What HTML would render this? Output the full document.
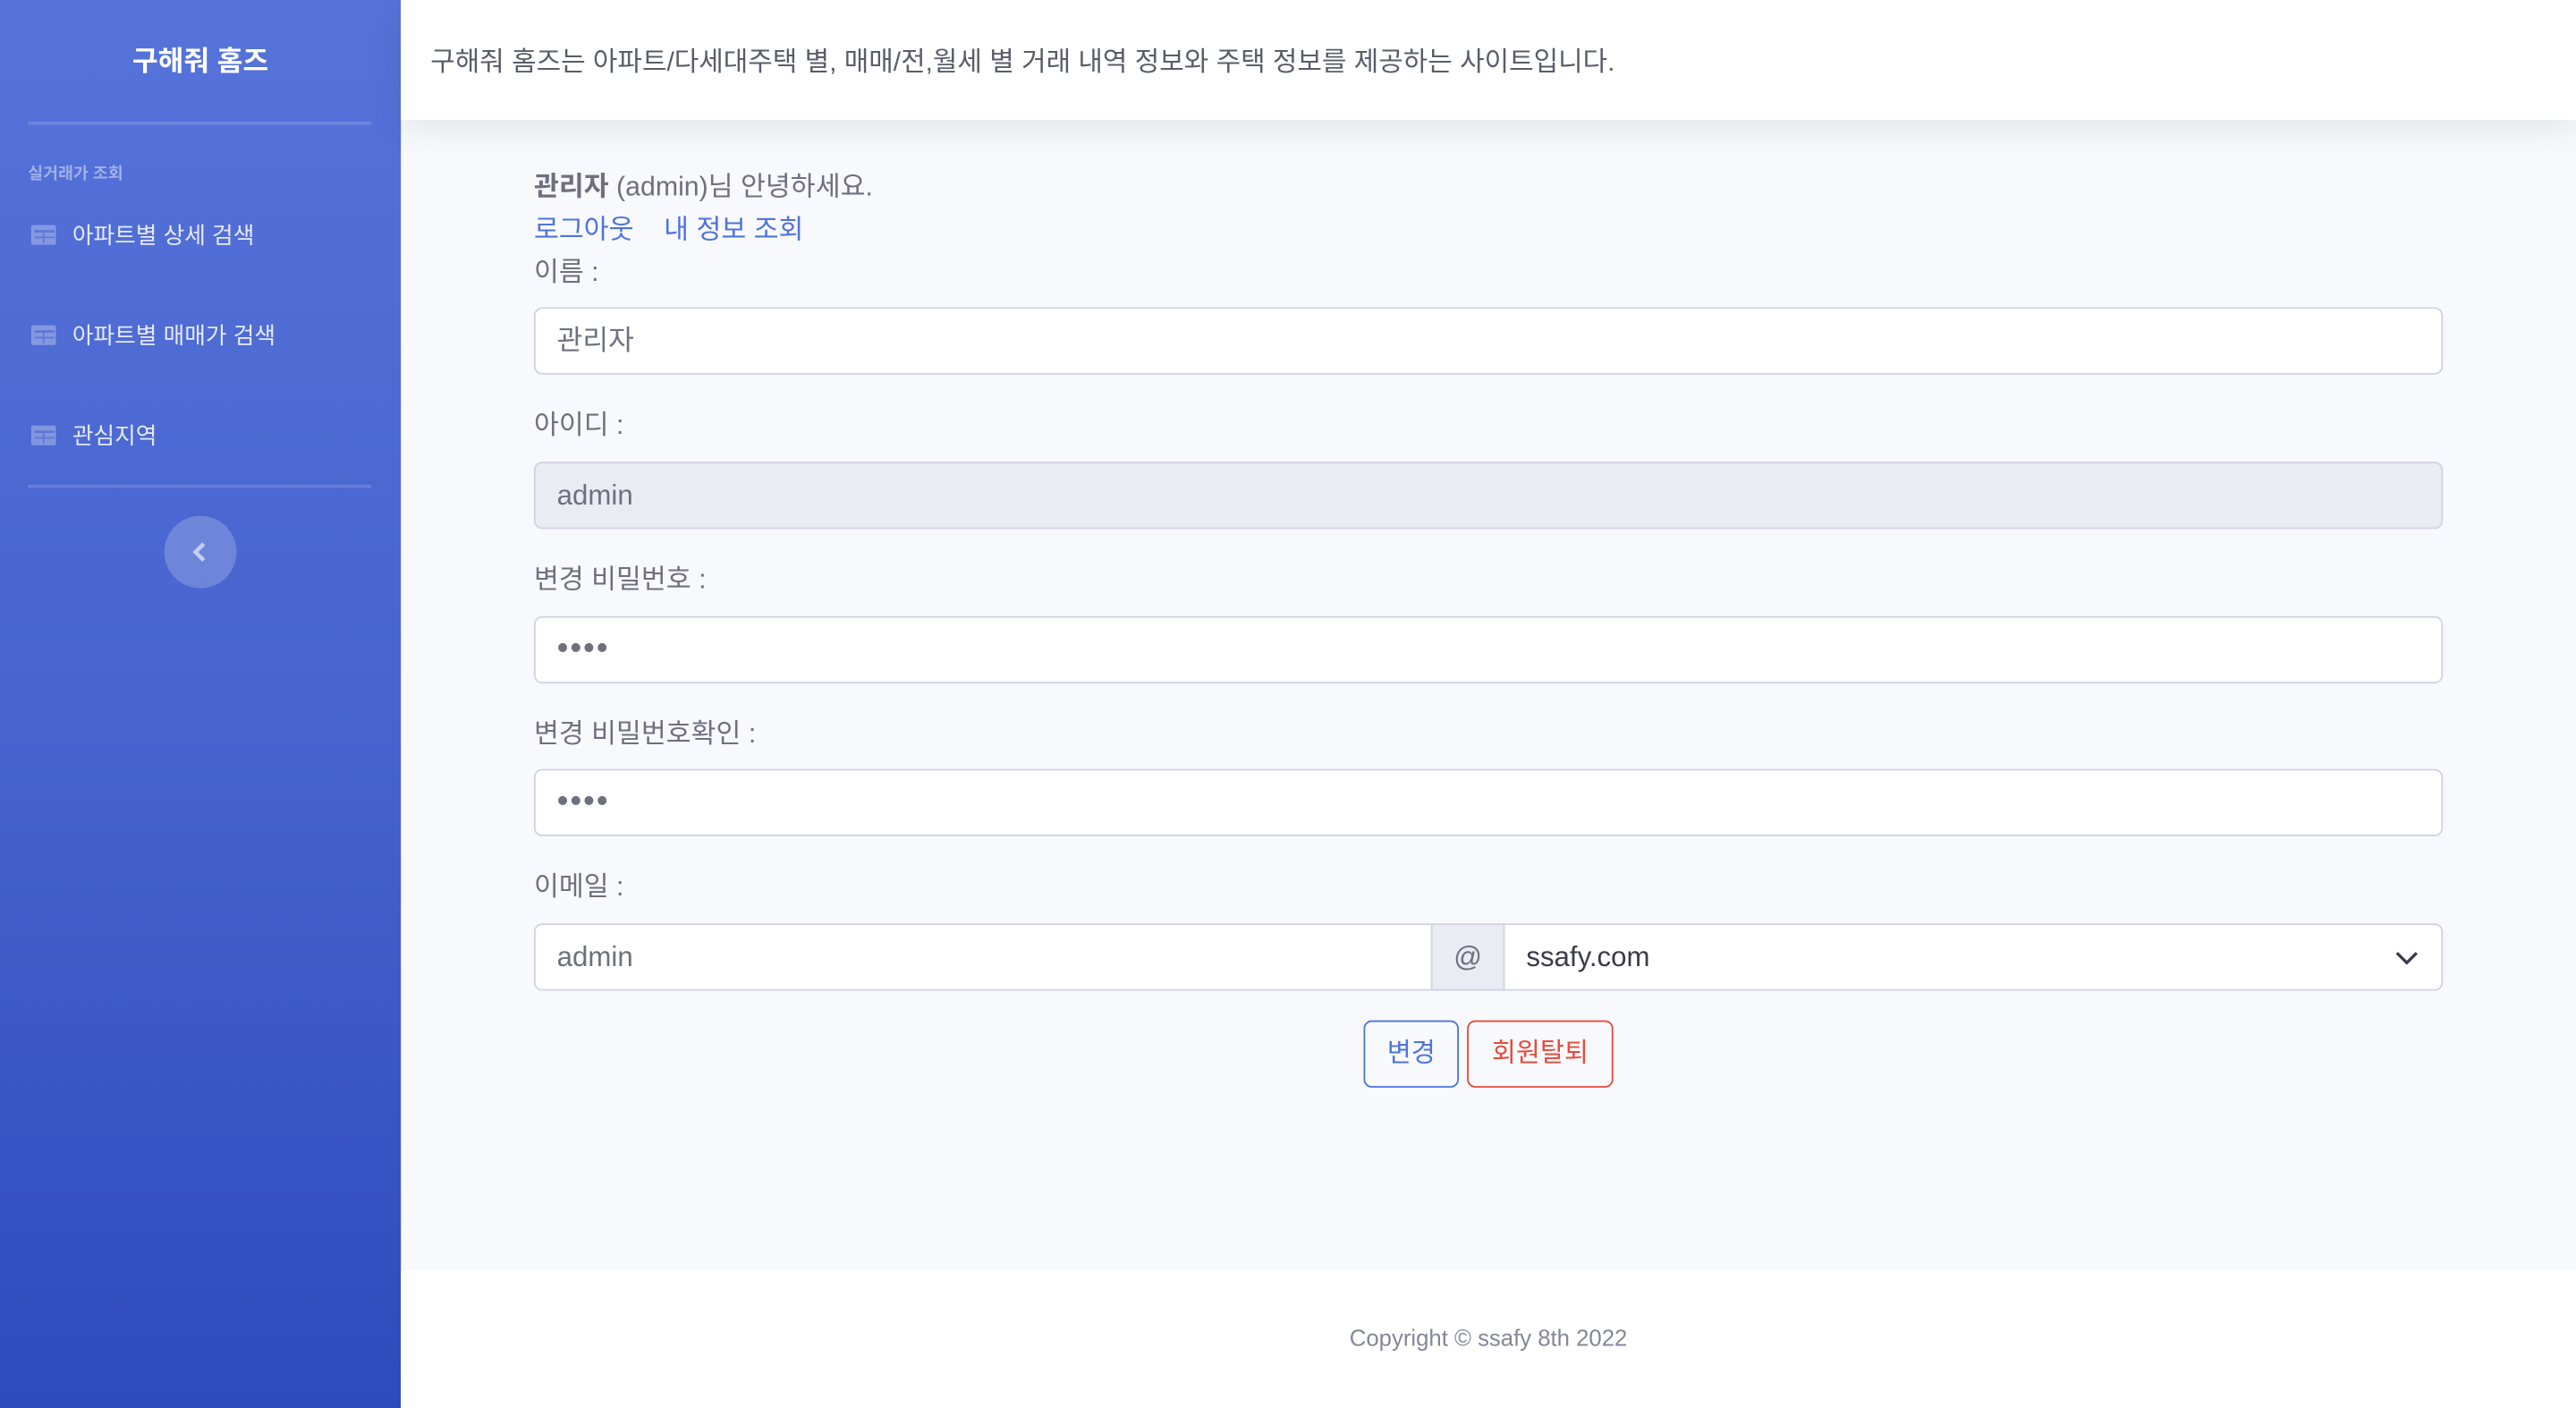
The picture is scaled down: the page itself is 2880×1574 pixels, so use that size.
<!DOCTYPE html>
<html><head><meta charset="utf-8"><style>
*{box-sizing:border-box;margin:0;padding:0}
html,body{width:2880px;height:1574px;overflow:hidden;background:#f8f9fc}
#s{position:absolute;left:0;top:0;width:1568px;height:857px;transform:scale(1.836735);transform-origin:0 0;font-family:"Liberation Sans","Noto Sans CJK KR",sans-serif;background:#f8f9fc}
.a{position:absolute;white-space:nowrap}
#sb{left:0;top:0;width:244px;height:857px;background:linear-gradient(180deg,#5673da 0%,#4764cf 50%,#2e4bbd 100%)}
.hr{position:absolute;left:17px;width:209px;height:2px;background:rgba(255,255,255,.15)}
.nav{left:44px;font-size:14px;color:rgba(255,255,255,.85);transform:translateY(-50%)}
.ic{position:absolute;left:19px;width:15px;height:12px;border-radius:1px;background:rgba(255,255,255,.3)}
.ic:before{content:"";position:absolute;left:1.5px;right:1.5px;top:2.5px;bottom:1.5px;background:
linear-gradient(rgba(80,105,210,1),rgba(80,105,210,1)) 0 0/100% 1.5px no-repeat,
linear-gradient(rgba(80,105,210,1),rgba(80,105,210,1)) 0 4px/100% 1px no-repeat,
linear-gradient(rgba(80,105,210,1),rgba(80,105,210,1)) 5.5px 0/1px 100% no-repeat;opacity:.7}
.lb{left:325px;font-size:16.5px;color:#6e707e;transform:translateY(-50%)}
.in{position:absolute;left:325px;width:1162px;height:41px;border:1px solid #d1d3e2;border-radius:5px;background:#fff;font-size:17px;color:#6e707e;padding-left:13px;line-height:39px}
</style></head><body><div id="s">
<div class="a" id="sb">
<div class="a" style="left:0;width:244px;top:23px;text-align:center;color:#fff;font-weight:bold;font-size:17px">구해줘 홈즈</div>
<div class="hr" style="top:74px"></div>
<div class="a" style="left:17px;top:97px;font-size:10px;font-weight:bold;color:rgba(255,255,255,.45)">실거래가 조회</div>
<div class="ic" style="top:137px"></div><div class="a nav" style="top:143px">아파트별 상세 검색</div>
<div class="ic" style="top:198px"></div><div class="a nav" style="top:204px">아파트별 매매가 검색</div>
<div class="ic" style="top:259px"></div><div class="a nav" style="top:265px">관심지역</div>
<div class="hr" style="top:295px"></div>
<div class="a" style="left:100px;top:314px;width:44px;height:44px;border-radius:50%;background:rgba(255,255,255,.2)"><svg width="44" height="44" viewBox="0 0 44 44"><path d="M24 17l-5 5 5 5" stroke="rgba(255,255,255,.6)" stroke-width="2.5" fill="none"/></svg></div>
</div>
<div class="a" style="left:244px;top:0;width:1324px;height:73px;background:#fff;box-shadow:0 4px 20px rgba(58,59,69,.12)"></div>
<div class="a" style="left:262px;top:24px;font-size:16.3px;color:#5a5c69">구해줘 홈즈는 아파트/다세대주택 별, 매매/전,월세 별 거래 내역 정보와 주택 정보를 제공하는 사이트입니다.</div>
<div class="a lb" style="top:112px"><b>관리자</b> (admin)님 안녕하세요.</div>
<div class="a lb" style="top:138px;color:#4e73df">로그아웃&nbsp;&nbsp;&nbsp;&nbsp;내 정보 조회</div>
<div class="a lb" style="top:164px">이름 :</div>
<div class="in" style="top:187px">관리자</div>
<div class="a lb" style="top:257px">아이디 :</div>
<div class="in" style="top:281px;background:#eaecf4">admin</div>
<div class="a lb" style="top:351px">변경 비밀번호 :</div>
<div class="in" style="top:375px;font-size:20px;letter-spacing:1px">••••</div>
<div class="a lb" style="top:445px">변경 비밀번호확인 :</div>
<div class="in" style="top:468px;font-size:20px;letter-spacing:1px">••••</div>
<div class="a lb" style="top:538px">이메일 :</div>
<div class="in" style="top:562px;width:547px;border-radius:5px 0 0 5px">admin</div>
<div class="in" style="top:562px;left:871px;width:45px;border-radius:0;background:#eaecf4;padding:0;text-align:center">@</div>
<div class="in" style="top:562px;left:915px;width:572px;border-radius:0 5px 5px 0;color:#3a3b45">ssafy.com<svg style="position:absolute;right:14px;top:13px" width="14" height="14" viewBox="0 0 14 14"><path d="M1 4l6 6 6-6" stroke="#3a3b45" stroke-width="1.8" fill="none"/></svg></div>
<div class="a" style="left:830px;top:621px;width:58px;height:41px;border:1px solid #4e73df;border-radius:5px;color:#4e73df;font-size:16px;text-align:center;line-height:39px">변경</div>
<div class="a" style="left:893px;top:621px;width:89px;height:41px;border:1px solid #e74a3b;border-radius:5px;color:#e74a3b;font-size:16px;text-align:center;line-height:39px">회원탈퇴</div>
<div class="a" style="left:244px;top:773px;width:1324px;height:84px;background:#fff"></div>
<div class="a" style="left:244px;width:1324px;top:806px;text-align:center;font-size:14px;color:#858796">Copyright © ssafy 8th 2022</div>
</div></body></html>
